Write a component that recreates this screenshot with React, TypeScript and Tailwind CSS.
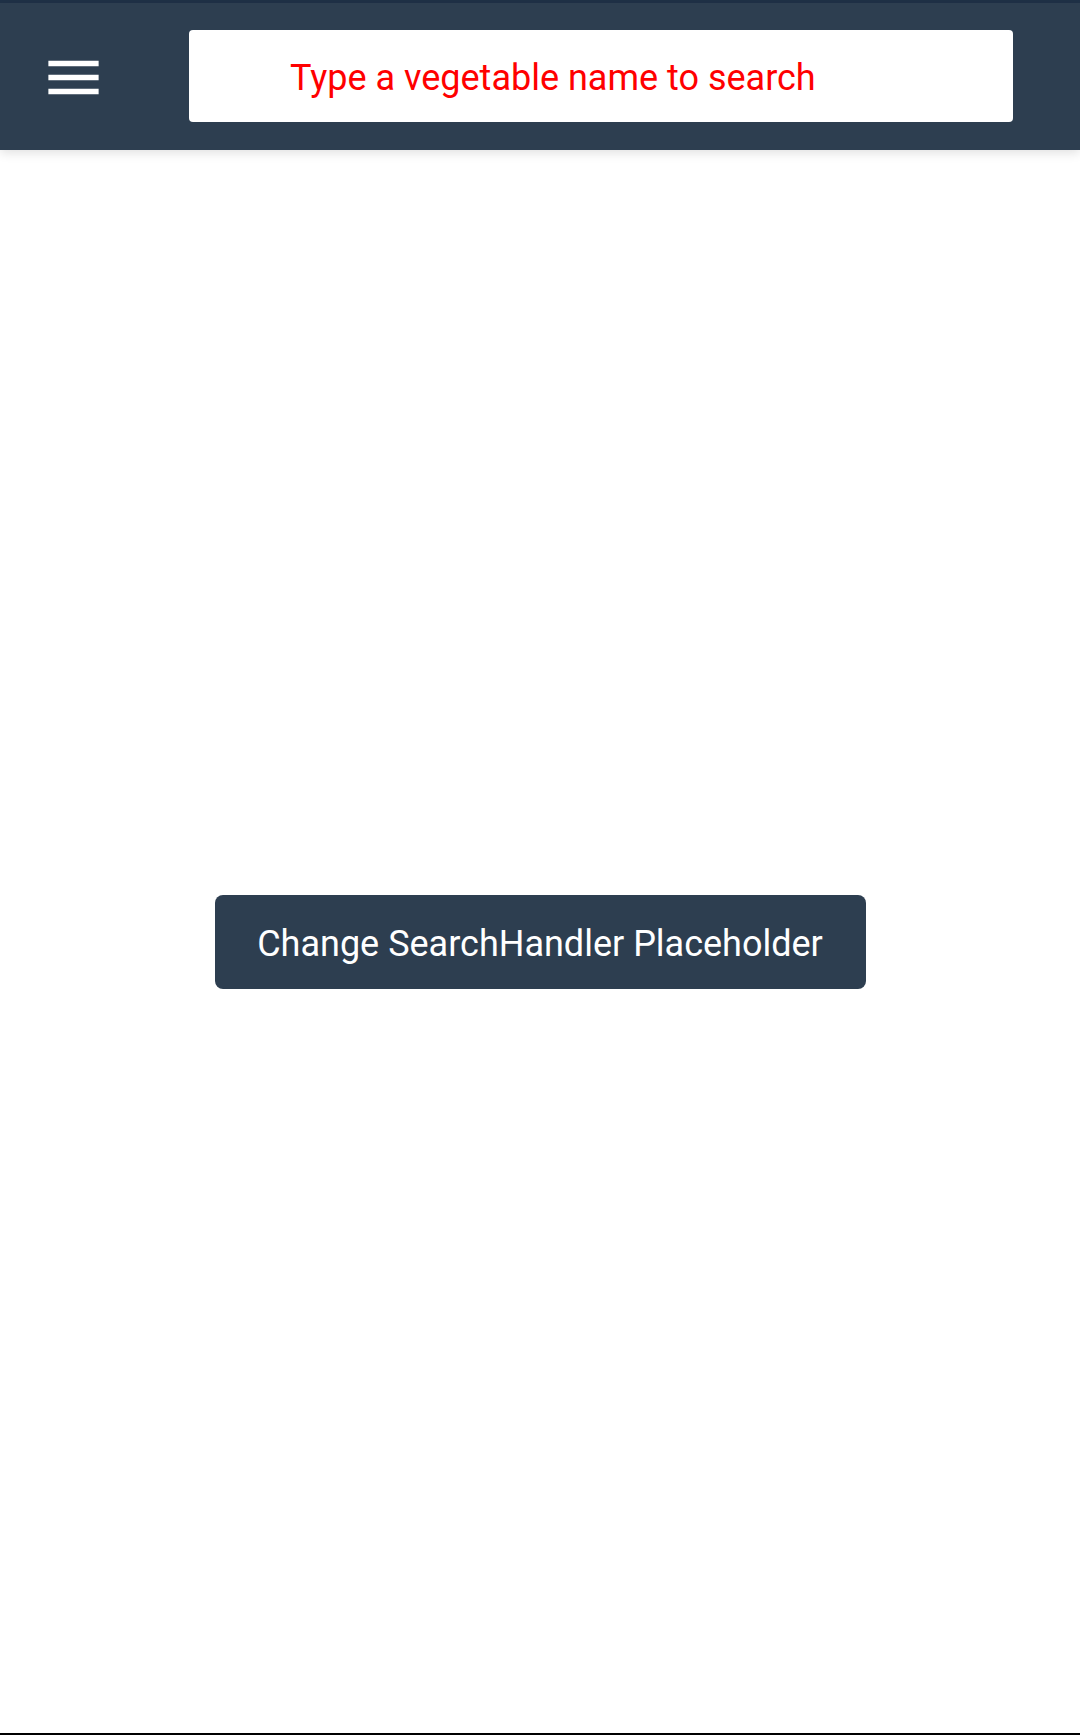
import React from "react";

export default function App() {
  return (
    <div className="flex flex-col w-[1080px] h-[1735px] bg-white" style={{ fontFamily: "Roboto, 'Liberation Sans', sans-serif" }}>
      <div className="h-[3px] bg-[#1f3147]" />
      <header className="relative z-10 flex items-center h-[147px] bg-[#2d3e50] shadow-[0_3px_10px_rgba(0,0,0,0.12)]">
        <div className="ml-[40px] w-[67px] h-[67px] mt-[1px]">
          <svg viewBox="0 0 24 24" width="67" height="67" fill="#ffffff">
            <path d="M3 18h18v-2H3v2zm0-5h18v-2H3v2zm0-7v2h18V6H3z" />
          </svg>
        </div>
        <div className="ml-[82px] flex items-center w-[824px] h-[92px] mt-[-1px] bg-white rounded-[4px] pl-[101px] pt-[3px]">
          <span className="text-[36px] leading-none text-[#ff0000]">Type a vegetable name to search</span>
        </div>
      </header>
      <main className="flex-1 flex items-center justify-center">
        <button className="flex items-center justify-center w-[651px] h-[94px] rounded-[8px] bg-[#2d3e50] text-white text-[36px] leading-none pt-[4px]">
          Change SearchHandler Placeholder
        </button>
      </main>
      <div className="h-[2px] bg-black" />
    </div>
  );
}
